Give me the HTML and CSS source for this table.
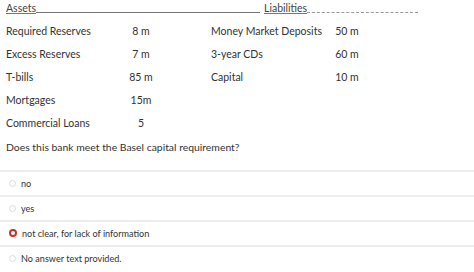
FILE: index.html
```html
<!DOCTYPE html>
<html>
<head>
<meta charset="utf-8">
<link rel="stylesheet" href="styles.css">
</head>
<body>
<div class="content">
  <div class="head">
    <span class="u">Assets</span><span class="fill"></span><span class="u">Liabilities</span><span class="dash"></span>
  </div>
  <div class="grid">
    <div>Required Reserves</div><div class="v">8 m</div><div></div><div>Money Market Deposits</div><div class="v">50 m</div>
    <div>Excess Reserves</div><div class="v">7 m</div><div></div><div>3-year CDs</div><div class="v">60 m</div>
    <div>T-bills</div><div class="v">85 m</div><div></div><div>Capital</div><div class="v">10 m</div>
    <div>Mortgages</div><div class="v">15m</div><div></div><div></div><div></div>
    <div>Commercial Loans</div><div class="v">5</div><div></div><div></div><div></div>
  </div>
  <p class="q">Does this bank meet the Basel capital requirement?</p>
</div>
<div class="answers">
  <div class="ans"><span class="radio"></span><span>no</span></div>
  <div class="ans"><span class="radio"></span><span>yes</span></div>
  <div class="ans"><span class="radio on"></span><span>not clear, for lack of information</span></div>
  <div class="ans"><span class="radio"></span><span>No answer text provided.</span></div>
</div>
</body>
</html>
```
FILE: styles.css
```css
html, body { margin: 0; padding: 0; background: #fff; }
body { font-family: Lato, "Open Sans", sans-serif; color: #333; font-size: 10.5px; white-space: nowrap; }
.content { padding: 0 6px; }
.head { display: flex; align-items: flex-end; height: 14px; line-height: 12px; color: #444; }
.u { text-decoration: underline; text-decoration-color: #777; text-underline-offset: 1px; }
.fill { flex: 0 0 224px; border-bottom: 1px solid #777; height: 0; margin: 0 4px 1px 0; }
.dash { flex: 0 0 111px; border-bottom: 1px dashed #999; height: 0; margin-bottom: 1px; }
.grid { display: grid; grid-template-columns: 110px 50px 45px 111px 50px; grid-auto-rows: 23.2px; align-items: center; margin-top: 5px; }
.v { text-align: center; }
.q { margin: 0; height: 24px; line-height: 24px; font-size: 10.4px; }
.answers { margin-top: 11px; }
.ans { display: flex; align-items: center; gap: 5px; height: 23px; border-top: 2px solid #ececec; padding-left: 9px; font-size: 9.1px; color: #333; }
.radio { width: 7px; height: 7px; border-radius: 50%; border: 1px solid #ddd; box-sizing: border-box; flex: none; }
.radio.on { border: 2.5px solid #c8302c; background: #fff; width: 8px; height: 8px; }
```
